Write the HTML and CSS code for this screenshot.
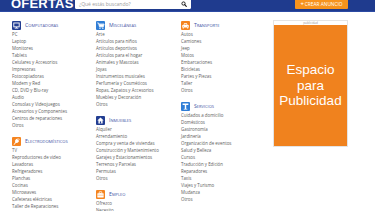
FILE: index.html
```html
<!DOCTYPE html>
<html lang="es">
<head>
<meta charset="utf-8">
<title>Ofertas</title>
<link rel="stylesheet" href="styles.css">
</head>
<body>
<header class="topbar">
  <div class="logo">OFERTAS</div>
  <div class="search">
    <span class="placeholder">¿Qué estás buscando?</span>
    <svg class="search-icon" viewBox="0 0 10 10"><circle cx="4.2" cy="4.2" r="2.7" fill="none" stroke="#1b1b1b" stroke-width="1.6"/><line x1="6.2" y1="6.2" x2="8.8" y2="8.8" stroke="#1b1b1b" stroke-width="1.9" stroke-linecap="round"/></svg>
  </div>
  <div class="btn-create"><span class="plus">+</span> CREAR ANUNCIO</div>
</header>
<main class="content">
  <div class="col col-1">
    <section class="cat">
      <h2 class="cat-title"><span class="ico ico-dark"><svg viewBox="0 0 10 10"><rect x="2" y="2.2" width="6" height="4.3" fill="none" stroke="#fff" stroke-width="1"/><rect x="4.3" y="6.6" width="1.4" height="1" fill="#fff"/><rect x="3" y="7.5" width="4" height="0.9" fill="#fff"/></svg></span>Computadoras</h2>
      <ul class="items">
        <li>PC</li><li>Laptop</li><li>Monitores</li><li>Tablets</li><li>Celulares y Accesorios</li><li>Impresoras</li><li>Fotocopiadoras</li><li>Modem y Red</li><li>CD, DVD y Blu-ray</li><li>Audio</li><li>Consolas y Videojuegos</li><li>Accesorios y Componentes</li><li>Centros de reparaciones</li><li>Otros</li>
      </ul>
    </section>
    <section class="cat">
      <h2 class="cat-title"><span class="ico ico-orange"><svg viewBox="0 0 10 10"><g transform="rotate(40 5 5)" fill="#fff"><rect x="3.9" y="0.8" width="0.7" height="2" /><rect x="5.4" y="0.8" width="0.7" height="2"/><path d="M3 2.7h4v1.8c0 1-0.8 1.7-1.5 1.8v1.2h-1v-1.2c-0.7-0.1-1.5-0.8-1.5-1.8z"/><rect x="4.6" y="7.2" width="0.8" height="2.4"/></g></svg></span>Electrodomésticos</h2>
      <ul class="items">
        <li>TV</li><li>Reproductores de video</li><li>Lavadoras</li><li>Refrigeradores</li><li>Planchas</li><li>Cocinas</li><li>Microwaves</li><li>Cafeteras eléctricas</li><li>Taller de Reparaciones</li>
      </ul>
    </section>
  </div>
  <div class="col col-2">
    <section class="cat">
      <h2 class="cat-title"><span class="ico ico-blue"><svg viewBox="0 0 10 10"><path d="M1.4 2.2h1.4l1.1 4.3h4.2l0.9-3.1H3.2" fill="none" stroke="#fff" stroke-width="0.9" stroke-linejoin="round"/><path d="M3.3 3.5h5.5l-0.8 2.8H4z" fill="#fff"/><circle cx="4.4" cy="8" r="0.75" fill="#fff"/><circle cx="7.6" cy="8" r="0.75" fill="#fff"/></svg></span>Misceláneas</h2>
      <ul class="items">
        <li>Arte</li><li>Artículos para niños</li><li>Artículos deportivos</li><li>Artículos para el hogar</li><li>Animales y Mascotas</li><li>Joyas</li><li>Instrumentos musicales</li><li>Perfumería y Cosméticos</li><li>Ropas, Zapatos y Accesorios</li><li>Muebles y Decoración</li><li>Otros</li>
      </ul>
    </section>
    <section class="cat">
      <h2 class="cat-title"><span class="ico ico-dark"><svg viewBox="0 0 10 10"><path d="M5 1.6L1.5 4.9h1.2v3.4h4.6V4.9h1.2z" fill="#fff"/><rect x="4.3" y="6" width="1.4" height="2.3" fill="#233e92"/></svg></span>Inmuebles</h2>
      <ul class="items">
        <li>Alquiler</li><li>Arrendamiento</li><li>Compra y venta de viviendas</li><li>Construcción y Mantenimiento</li><li>Garajes y Estacionamientos</li><li>Terrenos y Parcelas</li><li>Permutas</li><li>Otros</li>
      </ul>
    </section>
    <section class="cat">
      <h2 class="cat-title"><span class="ico ico-orange"><svg viewBox="0 0 10 10"><rect x="3.6" y="1.9" width="2.8" height="2" rx="0.4" fill="none" stroke="#fff" stroke-width="0.8"/><rect x="1.5" y="3.5" width="7" height="4.8" rx="0.6" fill="#fff"/><rect x="1.5" y="5.4" width="7" height="0.5" fill="#f5841f"/></svg></span>Empleo</h2>
      <ul class="items">
        <li>Ofrezco</li><li>Necesito</li>
      </ul>
    </section>
  </div>
  <div class="col col-3">
    <section class="cat">
      <h2 class="cat-title"><span class="ico ico-orange"><svg viewBox="0 0 10 10"><path d="M2.6 4.6L3.4 2.6h3.2l0.8 2z" fill="#fff"/><path d="M3.6 4.3l0.4-1.1h2l0.4 1.1z" fill="#f5841f"/><rect x="1.4" y="4.4" width="7.2" height="2.8" rx="0.6" fill="#fff"/><circle cx="2.9" cy="5.8" r="0.5" fill="#f5841f"/><circle cx="7.1" cy="5.8" r="0.5" fill="#f5841f"/><rect x="1.9" y="7" width="1.4" height="1.3" fill="#fff"/><rect x="6.7" y="7" width="1.4" height="1.3" fill="#fff"/></svg></span>Transporte</h2>
      <ul class="items">
        <li>Autos</li><li>Camiones</li><li>Jeep</li><li>Motos</li><li>Embarcaciones</li><li>Bicicletas</li><li>Partes y Piezas</li><li>Taller</li><li>Otros</li>
      </ul>
    </section>
    <section class="cat">
      <h2 class="cat-title"><span class="ico ico-blue"><svg viewBox="0 0 10 10"><path d="M1.8 1.8h6.4v1.6H5.8v4.5H4.2V3.4H1.8z" fill="#fff"/><rect x="3" y="7.6" width="4" height="0.8" fill="#fff"/></svg></span>Servicios</h2>
      <ul class="items">
        <li>Cuidados a domicilio</li><li>Domésticos</li><li>Gastronomía</li><li>Jardinería</li><li>Organización de eventos</li><li>Salud y Belleza</li><li>Cursos</li><li>Traducción y Edición</li><li>Reparadores</li><li>Taxis</li><li>Viajes y Turismo</li><li>Mudanza</li><li>Otros</li>
      </ul>
    </section>
  </div>
  <aside class="ad">
    <div class="ad-label">publicidad</div>
    <div class="ad-box">Espacio<br>para<br>Publicidad</div>
  </aside>
</main>
</body>
</html>
```

FILE: styles.css
```css
html, body {
  margin: 0;
  padding: 0;
  overflow: hidden;
  background: #ffffff;
}

body {
  font-family: "Open Sans", "Liberation Sans", Arial, sans-serif;
  color: #444;
}

.topbar {
  display: flex;
  align-items: flex-start;
  height: 11px;
  background: #1f3b8e;
  border-bottom: 1px solid #2c4ba3;
  overflow: hidden;
}

.logo {
  width: 61px;
  margin: -3px 0 0 11px;
  font-family: "Liberation Sans", Arial, sans-serif;
  font-weight: bold;
  font-size: 13px;
  line-height: 13px;
  color: #fff;
  letter-spacing: 0.2px;
  white-space: nowrap;
}

.search {
  display: flex;
  align-items: center;
  justify-content: space-between;
  width: 108px;
  height: 9px;
  margin-left: 3px;
  padding: 0 4px 0 4px;
  background: #fff;
  border-radius: 0 0 1.5px 1.5px;
}

.placeholder {
  font-size: 5px;
  line-height: 9px;
  color: #9a9a9a;
  white-space: nowrap;
}

.search-icon {
  width: 6px;
  height: 6px;
  margin-top: -1px;
}

.btn-create {
  display: flex;
  align-items: center;
  justify-content: center;
  width: 53px;
  height: 9px;
  margin: 0 27px 0 auto;
  background: #f7931d;
  border-radius: 0 0 1px 1px;
  color: #fff;
  font-size: 4.8px;
  line-height: 9px;
  white-space: nowrap;
}

.plus {
  font-weight: bold;
  font-size: 6px;
  margin-right: 1px;
}

.content {
  display: flex;
  align-items: flex-start;
  padding: 8px 0 0 12px;
}

.col-1 { width: 84px; }
.col-2 { width: 85px; }
.col-3 { width: 92px; }

.cat + .cat {
  margin-top: 7px;
}

.cat-title {
  display: flex;
  align-items: center;
  height: 10px;
  margin: 0 0 1px;
  font-size: 5.2px;
  font-weight: normal;
  font-variant: small-caps;
  color: #4252a5;
  white-space: nowrap;
}

.ico {
  display: flex;
  width: 9px;
  height: 9px;
  margin-right: 4px;
  border-radius: 1px;
  flex-shrink: 0;
}

.ico svg {
  width: 9px;
  height: 9px;
}

.ico-dark { background: #233e92; }
.ico-blue { background: #2f7dd6; }
.ico-orange { background: #f5841f; }

.items {
  list-style: none;
  margin: 0;
  padding: 0;
}

.items li {
  font-size: 4.4px;
  line-height: 7px;
  height: 7px;
  white-space: nowrap;
  color: #5e5e5e;
}

.ad {
  width: 73px;
  border: 1px solid #e4e4e4;
}

.ad-label {
  height: 4px;
  font-size: 3px;
  line-height: 4px;
  text-align: center;
  color: #999;
}

.ad-box {
  display: flex;
  align-items: center;
  justify-content: center;
  height: 121px;
  background: #f0821e;
  color: #fff;
  font-family: "Liberation Sans", Arial, sans-serif;
  font-size: 13.5px;
  line-height: 15.5px;
  text-align: center;
}
```
